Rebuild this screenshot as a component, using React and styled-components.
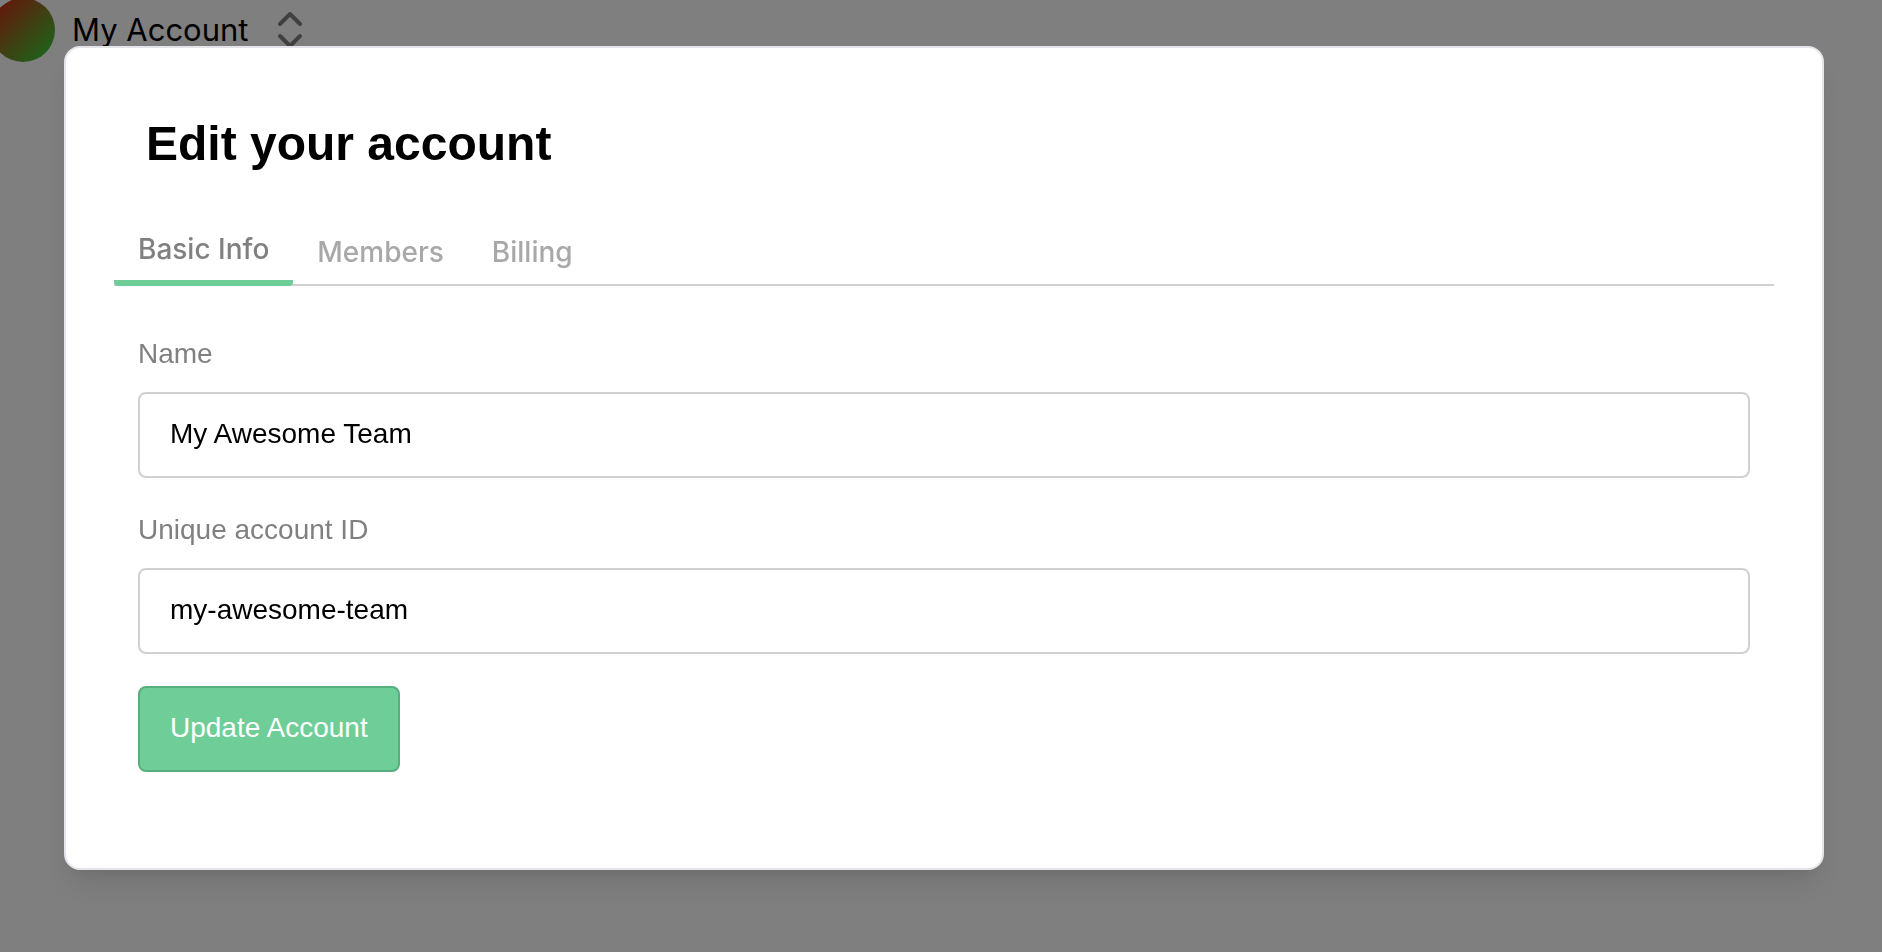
import React, { useState } from "react";
import styled, { createGlobalStyle } from "styled-components";

const GlobalStyle = createGlobalStyle`
  *, *::before, *::after { box-sizing: border-box; }
  html, body, #root { height: 100%; }
  body {
    margin: 0;
    background: #fff;
    color: #000;
    font-family: "Liberation Sans", Arial, sans-serif;
    overflow: hidden;
  }
`;

const Page = styled.div`
  min-height: 100%;
`;

const AccountSwitcher = styled.button`
  display: flex;
  align-items: center;
  margin: -2px 0 0 -9px;
  padding: 0;
  border: 0;
  background: none;
  color: inherit;
  font: 400 31px/64px Inter, sans-serif;
  cursor: pointer;
`;

const AccountName = styled.span`
  padding: 0 28px 0 17px;
`;

const Avatar = styled.span`
  width: 64px;
  height: 64px;
  border-radius: 50%;
  background: linear-gradient(135deg, #dc1c14 0%, #2cd838 100%);
`;

const SelectorIcon = styled.svg`
  width: 28px;
  height: 40px;
  fill: none;
  stroke: #808080;
  stroke-width: 4;
  stroke-linecap: round;
  stroke-linejoin: round;
`;

const Overlay = styled.div`
  position: fixed;
  inset: 0;
  padding: 46px 58px 82px 64px;
  background: rgba(0, 0, 0, 0.5);
  overflow: auto;
`;

const Dialog = styled.section`
  padding: 48px 48px 96px;
  background: #fff;
  border: 2px solid #e4e4eb;
  border-radius: 16px;
  box-shadow:
    0 20px 30px -6px rgba(0, 0, 0, 0.1),
    0 8px 12px -4px rgba(0, 0, 0, 0.05);
`;

const Title = styled.h1`
  margin: 0 0 26px;
  padding: 0 32px;
  font-size: 48px;
  line-height: 96px;
  font-weight: 700;
`;

const TabList = styled.div`
  display: flex;
  align-items: center;
  box-shadow: inset 0 -2px #d0d0d0;
`;

const Tab = styled.button`
  padding: 10px 24px;
  border: 0;
  border-bottom: ${({ $active }) => ($active ? "6px solid #6fce97" : "0")};
  border-radius: 0 0 4px 4px;
  background: none;
  color: ${({ $active }) => ($active ? "#808080" : "#a8a8a8")};
  font: 540 28px/42px Inter, sans-serif;
  cursor: pointer;
`;

const Form = styled.form`
  display: flex;
  flex-direction: column;
  align-items: stretch;
  gap: 32px;
  padding: 48px 24px 0;
`;

const Field = styled.div`
  display: flex;
  flex-direction: column;
  gap: 18px;
`;

const Label = styled.label`
  color: #808080;
  font-size: 28px;
  line-height: 40px;
`;

const TextInput = styled.input`
  width: 100%;
  height: 86px;
  padding: 23px 30px 25px;
  border: 2px solid #d0d0d0;
  border-radius: 8px;
  background: #fff;
  color: #000;
  font: 400 28px/34px "Liberation Sans", Arial, sans-serif;
  outline: none;
`;

const SubmitButton = styled.button`
  align-self: flex-start;
  padding: 23px 30px 25px;
  border: 2px solid #59ae7f;
  border-radius: 8px;
  background: #6fce97;
  color: #fff;
  font: 400 28px/34px "Liberation Sans", Arial, sans-serif;
  cursor: pointer;
`;

const TABS = ["Basic Info", "Members", "Billing"];

export default function App() {
  const [active, setActive] = useState(TABS[0]);
  const [name, setName] = useState("My Awesome Team");
  const [accountId, setAccountId] = useState("my-awesome-team");

  return (
    <>
      <GlobalStyle />
      <Page>
        <AccountSwitcher type="button">
          <Avatar />
          <AccountName>My Account</AccountName>
          <SelectorIcon viewBox="0 0 28 40" aria-hidden="true">
            <path d="M4 14L14 4l10 10M4 26l10 10 10-10" />
          </SelectorIcon>
        </AccountSwitcher>
      </Page>
      <Overlay>
        <Dialog role="dialog" aria-modal="true" aria-labelledby="dialog-title">
          <Title id="dialog-title">Edit your account</Title>
          <TabList role="tablist">
            {TABS.map((tab) => (
              <Tab
                key={tab}
                type="button"
                role="tab"
                aria-selected={tab === active}
                $active={tab === active}
                onClick={() => setActive(tab)}
              >
                {tab}
              </Tab>
            ))}
          </TabList>
          <Form onSubmit={(event) => event.preventDefault()}>
            <Field>
              <Label htmlFor="account-name">Name</Label>
              <TextInput
                id="account-name"
                type="text"
                value={name}
                onChange={(event) => setName(event.target.value)}
              />
            </Field>
            <Field>
              <Label htmlFor="account-id">Unique account ID</Label>
              <TextInput
                id="account-id"
                type="text"
                value={accountId}
                onChange={(event) => setAccountId(event.target.value)}
              />
            </Field>
            <SubmitButton type="submit">Update Account</SubmitButton>
          </Form>
        </Dialog>
      </Overlay>
    </>
  );
}
